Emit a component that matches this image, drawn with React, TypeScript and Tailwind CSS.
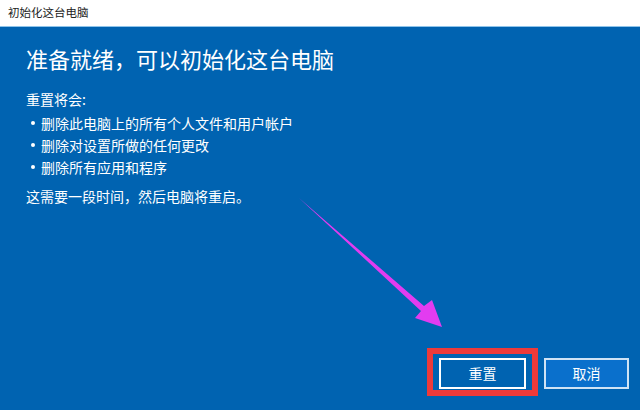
const font = { fontFamily: '"Noto Sans CJK SC", "Noto Sans", sans-serif' };

function Arrow() {
  return (
    <svg className="pointer-events-none absolute left-0 top-0" width="640" height="410" viewBox="0 0 640 410">
      <polygon points="299,198 424,306 432,300 442,327 415,318 421,311" fill="#e23cf0" />
    </svg>
  );
}

export default function App() {
  const items = ["删除此电脑上的所有个人文件和用户帐户", "删除对设置所做的任何更改", "删除所有应用和程序"];
  return (
    <div className="relative flex h-[410px] w-[640px] flex-col overflow-hidden bg-[#0063b1]" style={font}>
      <div className="flex h-[27px] items-center border-b border-[#8fc4ea] bg-white px-2 text-[11.5px] text-[#222]">
        初始化这台电脑
      </div>
      <div className="flex flex-1 flex-col pl-[26px] pr-[11px] text-white">
        <h1 className="mt-[17px] text-[22px] leading-[28px]">准备就绪，可以初始化这台电脑</h1>
        <p className="mt-[16px] text-[14px] leading-[22px]">重置将会:</p>
        <ul className="mt-[2px] text-[14px] leading-[22px]">
          {items.map((t) => (
            <li key={t} className="flex items-center">
              <span className="ml-[5px] mr-[6px] h-[4px] w-[4px] rounded-full bg-white" />
              {t}
            </li>
          ))}
        </ul>
        <p className="mt-[7px] text-[14px] leading-[22px]">这需要一段时间，然后电脑将重启。</p>
        <div className="mt-auto mb-[21px] flex justify-end gap-[18px]">
          <div className="relative">
            <button className="h-[31px] w-[87px] border-2 border-white bg-[#0063b1] text-[14px] text-white">重置</button>
            <div className="pointer-events-none absolute -inset-x-[12px] -bottom-[7px] -top-[10px] border-[6px] border-[#ee3a3a]" />
          </div>
          <button className="h-[31px] w-[85px] border-2 border-[#cfe3f5] bg-[#0a70cc] text-[14px] text-white">取消</button>
        </div>
      </div>
      <Arrow />
    </div>
  );
}
